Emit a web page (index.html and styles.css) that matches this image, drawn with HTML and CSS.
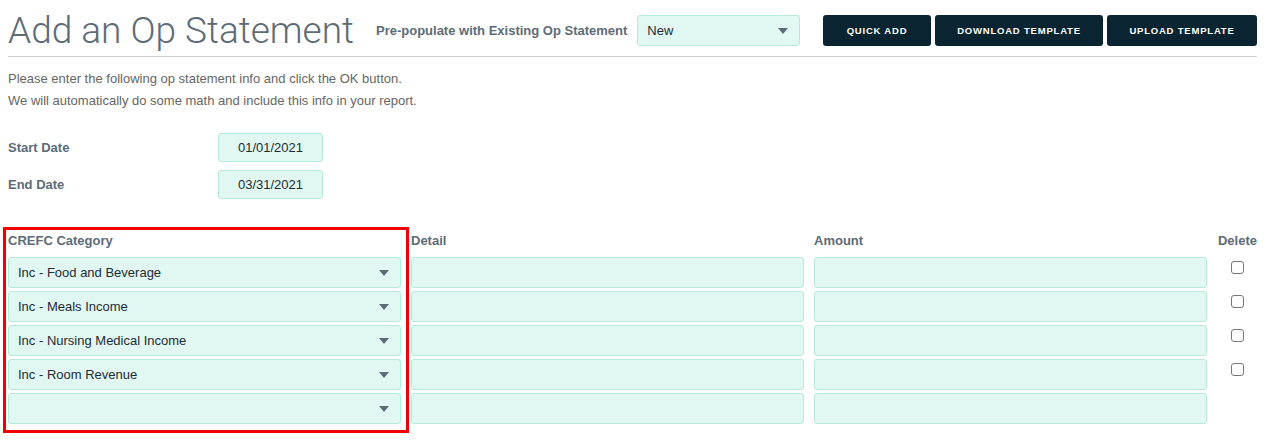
FILE: index.html
```html
<!DOCTYPE html>
<html>
<head>
	<meta charset="utf-8">
	<meta name="viewport" content="width=device-width, initial-scale=1">
	<title>Add an Op Statement</title>
	<link rel="stylesheet" href="styles.css">
</head>
<body>
<div class="page">
	<div class="top-bar">
		<h1>Add an Op Statement</h1>
		<div class="prepop">
			<label>Pre-populate with Existing Op Statement</label>
			<div class="select prepop-select"><span>New</span><i class="caret"></i></div>
		</div>
		<div class="actions">
			<button class="btn-quick">Quick Add</button>
			<button class="btn-download">Download Template</button>
			<button class="btn-upload">Upload Template</button>
		</div>
	</div>

	<div class="intro">
		<p>Please enter the following op statement info and click the OK button.</p>
		<p>We will automatically do some math and include this info in your report.</p>
	</div>

	<div class="dates">
		<div class="date-row">
			<label>Start Date</label>
			<div class="date-input">01/01/2021</div>
		</div>
		<div class="date-row">
			<label>End Date</label>
			<div class="date-input">03/31/2021</div>
		</div>
	</div>

	<div class="lines">
		<div class="highlight"></div>
		<div class="head">CREFC Category</div>
		<div class="head">Detail</div>
		<div class="head">Amount</div>
		<div class="head head-delete">Delete</div>

		<div class="select"><span>Inc - Food and Beverage</span><i class="caret"></i></div>
		<div class="field"></div>
		<div class="field"></div>
		<div class="del"><span class="check"></span></div>

		<div class="select"><span>Inc - Meals Income</span><i class="caret"></i></div>
		<div class="field"></div>
		<div class="field"></div>
		<div class="del"><span class="check"></span></div>

		<div class="select"><span>Inc - Nursing Medical Income</span><i class="caret"></i></div>
		<div class="field"></div>
		<div class="field"></div>
		<div class="del"><span class="check"></span></div>

		<div class="select"><span>Inc - Room Revenue</span><i class="caret"></i></div>
		<div class="field"></div>
		<div class="field"></div>
		<div class="del"><span class="check"></span></div>

		<div class="select"><span></span><i class="caret"></i></div>
		<div class="field"></div>
		<div class="field"></div>
		<div class="del"></div>
	</div>
</div>
</body>
</html>
```
FILE: styles.css
```css
* {
	margin: 0px;
	padding: 0px;
	box-sizing: border-box;
}

body {
	background: #fff;
	font-family: "Liberation Sans", Arial, sans-serif;
	font-size: 13px;
	color: #1e2b36;
}

.page {
	padding: 0px 9px 20px 8px;
}

.top-bar {
	display: flex;
	align-items: center;
	height: 57px;
	padding-top: 5px;
	border-bottom: 1px solid #cfcfcf;
}

.top-bar h1 {
	font-family: Roboto, "Liberation Sans", sans-serif;
	font-weight: 300;
	font-size: 37px;
	color: #5d6b77;
	margin-right: 22px;
	white-space: nowrap;
}

.prepop {
	display: flex;
	align-items: center;
}

.prepop label {
	font-weight: bold;
	color: #5d6b77;
	margin-right: 10px;
}

.select {
	display: flex;
	align-items: center;
	justify-content: space-between;
	height: 31px;
	padding: 0px 11px 0px 9px;
	background: #e1f7f2;
	border: 1px solid #b7eadc;
	border-radius: 3px;
	color: #1e2b36;
}

.prepop-select {
	width: 163px;
	height: 31px;
}

.caret {
	width: 0px;
	height: 0px;
	border-left: 5px solid transparent;
	border-right: 5px solid transparent;
	border-top: 6px solid #5d6b77;
}

.actions {
	display: flex;
	gap: 4px;
	margin-left: auto;
}

.actions button {
	height: 31px;
	background: #0b2431;
	color: #fff;
	border: none;
	border-radius: 3px;
	font-family: "Liberation Sans", Arial, sans-serif;
	font-weight: bold;
	font-size: 9.5px;
	letter-spacing: 0.8px;
	text-transform: uppercase;
	cursor: pointer;
}

.btn-quick { width: 108px; }
.btn-download { width: 168px; }
.btn-upload { width: 150px; }

.intro {
	margin-top: 11px;
	color: #666;
	line-height: 22px;
}

.dates {
	margin-top: 21px;
	display: flex;
	flex-direction: column;
	gap: 8px;
}

.date-row {
	display: flex;
	align-items: center;
}

.date-row label {
	width: 210px;
	font-weight: bold;
	color: #5d6b77;
}

.date-input {
	width: 105px;
	height: 29px;
	line-height: 27px;
	text-align: center;
	background: #e1f7f2;
	border: 1px solid #b7eadc;
	border-radius: 3px;
}

.lines {
	position: relative;
	margin-top: 34px;
	display: grid;
	grid-template-columns: 1fr 1fr 1fr 40px;
	column-gap: 10px;
	row-gap: 3px;
}

.head {
	font-weight: bold;
	color: #5d6b77;
	height: 21px;
	line-height: 16px;
}

.head-delete {
	text-align: right;
}

.field {
	height: 31px;
	background: #e1f7f2;
	border: 1px solid #b7eadc;
	border-radius: 3px;
}

.del {
	display: flex;
	justify-content: center;
	padding-top: 4px;
}

.check {
	display: block;
	width: 13px;
	height: 13px;
	border: 1px solid #777;
	border-radius: 3px;
	background: #fff;
}

.highlight {
	position: absolute;
	left: -5px;
	top: -6px;
	width: 406px;
	height: 206px;
	border: 3px solid #f20000;
	pointer-events: none;
}
```
